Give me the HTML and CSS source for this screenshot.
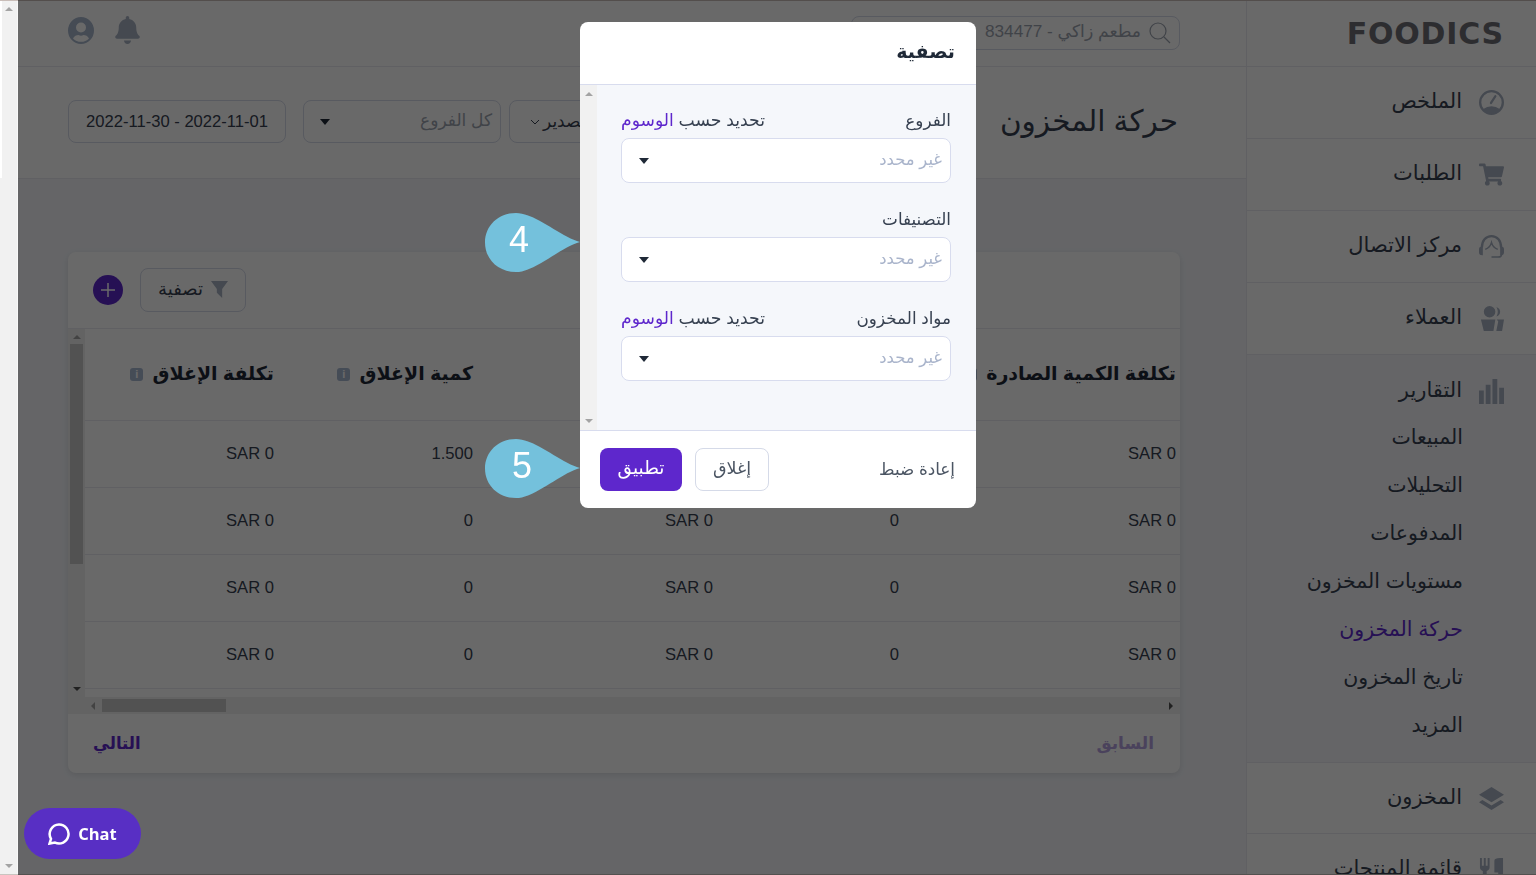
FILE: index.html
```html
<!doctype html>
<html lang="ar" dir="rtl">
<head>
<meta charset="UTF-8">
<title>حركة المخزون</title>
<link rel="stylesheet" href="styles.css">
</head>
<body>
<div class="screen">

	<!-- sidebar -->
	<nav class="side">
		<div class="logo_box"><span class="logo">FOODICS</span></div>
		<a class="nav_item">
			<svg class="nav_ico" viewBox="0 0 26 26"><path fill-rule="evenodd" d="M13 0a13 13 0 1 1 0 26a13 13 0 0 1 0-26zm0 2.400a10.600 10.600 0 1 0 0 21.200a10.600 10.600 0 0 0 0-21.200z"/><path d="M4 20Q13 14 22 20A12 12 0 0 1 4 20z"/><path d="M12.500 13.500L17 6.500" stroke="#a7b1c2" stroke-width="2.400" stroke-linecap="round"/></svg>
			<span>الملخص</span>
		</a>
		<a class="nav_item">
			<svg class="nav_ico" viewBox="0 0 576 512"><path d="M528.12 301.319l47.273-208C578.806 78.301 567.391 64 551.99 64H159.208l-9.166-44.81C147.758 8.021 137.93 0 126.529 0H24C10.745 0 0 10.745 0 24v16c0 13.255 10.745 24 24 24h69.883l70.248 343.435C147.325 417.1 136 435.222 136 456c0 30.928 25.072 56 56 56s56-25.072 56-56c0-15.674-6.447-29.835-16.824-40h209.647C430.447 426.165 424 440.326 424 456c0 30.928 25.072 56 56 56s56-25.072 56-56c0-22.172-12.888-41.332-31.579-50.405l5.517-24.276c3.413-15.018-8.002-29.319-23.403-29.319H218.117l-6.545-32h293.145c11.206 0 20.92-7.754 23.403-18.681z"/></svg>
			<span>الطلبات</span>
		</a>
		<a class="nav_item">
			<svg class="nav_ico" viewBox="0 0 26 24"><path d="M3 13C3 6 7 1.300 13 1.300S23 6 23 13" fill="none" stroke="#a7b1c2" stroke-width="2.400"/><path d="M6.500 15c2.500-1 5.500-3.500 6.500-7 1 3.500 4 6 6.500 7" fill="none" stroke="#a7b1c2" stroke-width="1.600"/><path d="M0 15a3 3 0 0 1 3-3h1v9H3a3 3 0 0 1-3-3zM26 15a3 3 0 0 0-3-3h-1v9h1a3 3 0 0 0 3-3z"/><path d="M23.500 20c0 2-1.500 3-3.500 3h-7" fill="none" stroke="#a7b1c2" stroke-width="1.600"/></svg>
			<span>مركز الاتصال</span>
		</a>
		<a class="nav_item">
			<svg class="nav_ico" viewBox="0 0 26 26"><path d="M11 0a6 6 0 1 1 0 12a6 6 0 0 1 0-12zM18 1c3 1 4 3 4 5s-1 4-4 5c1-1.500 1.500-3 1.500-5S19 2.500 18 1zM2 14h15l-2 12H5zM18.500 14H26l-2 12h-6l2-10z"/></svg>
			<span>العملاء</span>
		</a>
		<div class="nav_group">
			<div class="nav_head">
				<svg class="nav_ico" viewBox="0 0 26 26"><path d="M0 12h5v14H0zM7 6h5v20H7zM14 0h5v26h-5zM21 9h5v17h-5z"/></svg>
				<span>التقارير</span>
			</div>
			<a class="sub_item">المبيعات</a>
			<a class="sub_item">التحليلات</a>
			<a class="sub_item">المدفوعات</a>
			<a class="sub_item">مستويات المخزون</a>
			<a class="sub_item active">حركة المخزون</a>
			<a class="sub_item">تاريخ المخزون</a>
			<a class="sub_item">المزيد</a>
		</div>
		<a class="nav_item short">
			<svg class="nav_ico" viewBox="0 0 26 24"><path d="M13 0l13 8-13 8L0 8z"/><path d="M3.500 13.500L13 19.300l9.500-5.800L26 16 13 24 0 16z"/></svg>
			<span>المخزون</span>
		</a>
		<a class="nav_item">
			<svg class="nav_ico" viewBox="0 0 26 24"><path d="M1 0h2v8h2V0h2v8h2V0h2v10c0 2-1.500 3-3 3.500V24H4V13.500C2.500 13 1 12 1 10zM16 3c0-2 2-3 6-3h3v24h-5v-9h-4z"/></svg>
			<span>قائمة المنتجات</span>
		</a>
	</nav>

	<!-- main -->
	<div class="main">
		<header class="top">
			<div class="search">
				<svg class="search_ico" viewBox="0 0 22 22"><circle cx="9" cy="9" r="8"/><path d="M15 15l6 6"/></svg>
				<span>مطعم زاكي - 834477</span>
			</div>
			<div class="top_icons">
				<svg class="bell" viewBox="0 0 448 512"><path d="M224 512c35.32 0 63.97-28.65 63.97-64H160.03c0 35.35 28.65 64 63.97 64zm215.39-149.71c-19.32-20.76-55.47-51.99-55.47-154.29 0-77.7-54.48-139.9-127.94-155.16V32c0-17.67-14.32-32-31.98-32s-31.98 14.33-31.98 32v20.84C118.56 68.1 64.08 130.3 64.08 208c0 102.3-36.15 133.53-55.47 154.29-6 6.45-8.66 14.16-8.61 21.71.11 16.4 12.98 32 32.1 32h383.8c19.12 0 32-15.6 32.1-32 .05-7.55-2.61-15.27-8.61-21.71z"/></svg>
				<svg class="user" viewBox="0 0 26 27"><path fill-rule="evenodd" d="M13 0a13 13.500 0 1 1 0 27a13 13.500 0 0 1 0-27zm0 5.500a5 5 0 1 0 0 10a5 5 0 0 0 0-10zM5 21.500c2 2.500 5 3.300 8 3.300s6-.8 8-3.300c-1-2.500-3.500-3.500-5.500-3.500-1 .5-1.500.7-2.500.7s-1.500-.2-2.500-.7c-2 0-4.500 1-5.500 3.500z"/></svg>
			</div>
		</header>

		<div class="head_row">
			<h1 class="page_tit">حركة المخزون</h1>
			<div class="controls">
				<button class="ctl export">تصدير <svg class="chev" viewBox="0 0 10 6"><path d="M1 1l4 4 4-4"/></svg></button>
				<div class="ctl branches"><span>كل الفروع</span><i class="caret"></i></div>
				<div class="ctl dates">2022-11-01 - 2022-11-30</div>
			</div>
		</div>

		<section class="content">
			<div class="card">
				<div class="toolbar">
					<button class="filter_btn">
						<svg class="funnel" viewBox="0 0 16 16"><path d="M0 0h16l-5.500 7.500V16L5.500 11V7.500z"/></svg>
						تصفية
					</button>
					<span class="add_btn"><svg viewBox="0 0 14 14"><path d="M7 0v14M0 7h14"/></svg></span>
				</div>

				<div class="tbl_wrap">
					<div class="tbl_area">
						<table class="tbl">
							<colgroup><col class="c1"><col class="c2"><col class="c3"><col class="c4"><col class="c5"></colgroup>
							<thead>
								<tr>
									<th>تكلفة الكمية الصادرة <i class="info">i</i></th>
									<th>الكمية الواردة <i class="info">i</i></th>
									<th>تكلفة الوارد <i class="info">i</i></th>
									<th>كمية الإغلاق <i class="info">i</i></th>
									<th>تكلفة الإغلاق <i class="info">i</i></th>
								</tr>
							</thead>
							<tbody>
								<tr><td>SAR 0</td><td>0</td><td>SAR 0</td><td>1.500</td><td>SAR 0</td></tr>
								<tr><td>SAR 0</td><td>0</td><td>SAR 0</td><td>0</td><td>SAR 0</td></tr>
								<tr><td>SAR 0</td><td>0</td><td>SAR 0</td><td>0</td><td>SAR 0</td></tr>
								<tr><td>SAR 0</td><td>0</td><td>SAR 0</td><td>0</td><td>SAR 0</td></tr>
							</tbody>
						</table>
					</div>
					<div class="v_bar">
						<i class="arr up"></i>
						<span class="v_thumb"></span>
						<i class="arr down"></i>
					</div>
					<div class="h_bar">
						<i class="arr right"></i>
						<span class="h_space"></span>
						<span class="h_thumb"></span>
						<i class="arr left"></i>
					</div>
				</div>

				<div class="pager">
					<a class="prev">السابق</a>
					<a class="next">التالي</a>
				</div>
			</div>
		</section>

		<div class="shade"></div>

		<!-- modal -->
		<div class="modal">
			<div class="m_head">تصفية</div>
			<div class="m_body">
				<div class="m_fields">
					<div class="field">
						<div class="f_label"><label>الفروع</label><a>تحديد حسب <b>الوسوم</b></a></div>
						<div class="f_select"><span>غير محدد</span><i class="caret"></i></div>
					</div>
					<div class="field">
						<div class="f_label"><label>التصنيفات</label></div>
						<div class="f_select"><span>غير محدد</span><i class="caret"></i></div>
					</div>
					<div class="field">
						<div class="f_label"><label>مواد المخزون</label><a>تحديد حسب <b>الوسوم</b></a></div>
						<div class="f_select"><span>غير محدد</span><i class="caret"></i></div>
					</div>
				</div>
				<div class="m_bar"><i class="arr up"></i><i class="arr down"></i></div>
			</div>
			<div class="m_foot">
				<a class="reset">إعادة ضبط</a>
				<div class="m_btns">
					<button class="btn_close">إغلاق</button>
					<button class="btn_apply">تطبيق</button>
				</div>
			</div>
		</div>

		<!-- callouts -->
		<div class="drop d4">
			<svg viewBox="0 0 95 59"><path d="M95 29C76 34 50 59 31 59C13 59 0 46 0 29.500C0 13 13 0 31 0C50 0 76 24 95 29Z"/></svg>
			<span>4</span>
		</div>
		<div class="drop d5">
			<svg viewBox="0 0 95 59"><path d="M95 29C76 34 50 59 31 59C13 59 0 46 0 29.500C0 13 13 0 31 0C50 0 76 24 95 29Z"/></svg>
			<span>5</span>
		</div>

		<button class="chat">
			<svg viewBox="0 0 22 22"><path d="M11 1.500a9.500 9.500 0 1 1-4 18.100l-5.500 1 1.500-4.800A9.500 9.500 0 0 1 11 1.500z"/></svg>
			<span>Chat</span>
		</button>
	</div>

	<!-- page scrollbar -->
	<div class="page_bar">
		<i class="arr up"></i>
		<i class="arr down"></i>
	</div>
</div>
</body>
</html>
```

FILE: styles.css
```css
* {
box-sizing: border-box;
}

html, body {
margin: 0;
height: 100%;
overflow: hidden;
}

body {
font-family: "Liberation Sans", "DejaVu Sans", sans-serif;
font-size: 16.600px;
color: #374151;
background: #fff;
}

a, button {
font-family: inherit;
}

/* whole window */
.screen {
display: flex;
height: 875px;
border-top: 1px solid #c9bdb8;
border-bottom: 1px solid #c9c5c0;
overflow: hidden;
}

/* sidebar */
.side {
width: 290px;
flex: none;
background: #fff;
border-left: 1px solid #e8eaf1;
}

.logo_box {
height: 66px;
border-bottom: 1px solid #e8eaf1;
display: flex;
align-items: center;
padding-right: 32px;
direction: ltr;
justify-content: flex-end;
}

.logo {
font-family: "DejaVu Sans", sans-serif;
font-weight: bold;
font-size: 30px;
letter-spacing: 0.800px;
line-height: 1;
color: #6d6e76;
}

.nav_item, .nav_head {
display: flex;
align-items: center;
gap: 17px;
padding-right: 32px;
font-size: 21px;
}

.nav_item span, .nav_head span {
margin-bottom: 3px;
}

.nav_item {
height: 72px;
border-bottom: 1px solid #e8eaf1;
}

.nav_item.short {
height: 71px;
}

.nav_ico {
width: 25px;
height: 25px;
flex: none;
fill: #a7b1c2;
}

.nav_group {
height: 408px;
background: #f4f6fb;
border-bottom: 1px solid #e8eaf1;
padding-top: 12px;
}

.nav_head {
height: 48px;
}

.sub_item {
display: block;
height: 48px;
line-height: 44px;
padding-right: 73px;
font-size: 20.500px;
}

.sub_item.active {
color: #5e27cc;
}

/* main part */
.main {
flex: 1;
min-width: 0;
background: #f4f6fb;
}

.top {
background: #fff;
border-bottom: 1px solid #e8eaf1;
padding: 15px 66px 0 50px;
display: flex;
justify-content: space-between;
align-items: flex-start;
height: 66px;
}

.search {
width: 329px;
height: 34px;
border: 1px solid #d5dae8;
border-radius: 8px;
display: flex;
align-items: center;
gap: 8px;
padding-right: 8px;
color: #9ca3af;
font-size: 17.200px;
}

.search span {
margin-bottom: 3px;
}

.search_ico {
width: 22px;
height: 22px;
fill: none;
stroke: #9ca3af;
stroke-width: 1.200;
}

.top_icons {
display: flex;
align-items: center;
gap: 21px;
}

.user {
width: 26px;
height: 27px;
fill: #a7b6cc;
}

.bell {
width: 25px;
height: 28px;
fill: #a7b1c2;
}

.head_row {
height: 112px;
background: #fff;
border-bottom: 1px solid #e8eaf1;
padding: 0 68px 2px 50px;
display: flex;
justify-content: space-between;
align-items: center;
}

.page_tit {
margin: 0 0 2px;
font-size: 29.500px;
font-weight: normal;
}

.controls {
display: flex;
align-items: center;
gap: 8px;
}

.ctl {
height: 43px;
border: 1px solid #d5dae8;
border-radius: 8px;
background: #fff;
display: flex;
align-items: center;
font-size: 16.600px;
color: #374151;
}

.export {
width: 140px;
gap: 3px;
justify-content: flex-end;
padding: 0 0 0 20px;
font-size: 17px;
}

.chev {
width: 10px;
height: 6px;
fill: none;
stroke: #374151;
}

.branches {
width: 198px;
justify-content: space-between;
padding: 0 8px 0 16px;
color: #9ca3af;
font-size: 17px;
}

.branches span {
margin-bottom: 2px;
}

.dates {
width: 218px;
justify-content: center;
margin-right: 9px;
}

.caret {
display: block;
width: 0;
height: 0;
border-top: 6px solid #1f2937;
border-left: 5.500px solid transparent;
border-right: 5.500px solid transparent;
}

.content {
padding: 73px 66px 0 50px;
}

/* table card */
.card {
height: 521px;
background: #fff;
border-radius: 8px;
box-shadow: 0 2px 6px rgba(0, 0, 0, 0.1);
display: flex;
flex-direction: column;
}

.toolbar {
height: 77px;
flex: none;
display: flex;
align-items: center;
justify-content: flex-end;
gap: 17px;
padding-left: 25px;
border-bottom: 1px solid #e8eaf1;
}

.filter_btn {
width: 106px;
height: 44px;
border: 1px solid #d5dae8;
border-radius: 8px;
background: #fff;
display: flex;
align-items: center;
justify-content: center;
gap: 8px;
font-size: 18px;
color: #374151;
padding: 0 0 2px;
}

.funnel {
width: 17px;
height: 17px;
fill: #a7b1c2;
}

.add_btn {
width: 30px;
height: 30px;
border-radius: 50%;
background: #5e27cc;
display: flex;
align-items: center;
justify-content: center;
}

.add_btn svg {
width: 14px;
height: 14px;
stroke: #fff;
stroke-width: 1.500;
}

.tbl_wrap {
flex: 1;
display: grid;
grid-template-columns: 1fr 17px;
grid-template-rows: 368px 17px;
}

.tbl_area {
overflow: hidden;
}

.tbl {
width: 1095px;
table-layout: fixed;
border-collapse: collapse;
}

.c1 { width: 277px; }
.c2 { width: 186px; }
.c3 { width: 240px; }
.c4 { width: 199px; }
.c5 { width: 193px; }

.tbl th {
height: 91px;
padding: 0 4px 2px 0;
text-align: right;
font-size: 19px;
font-weight: bold;
color: #1f2937;
border-bottom: 1px solid #e8eaf1;
white-space: nowrap;
}

.tbl td {
height: 67px;
padding: 0 4px 0 0;
text-align: right;
font-size: 16.600px;
color: #374151;
border-bottom: 1px solid #e8eaf1;
}

.info {
display: inline-block;
width: 13px;
height: 13px;
margin-right: 4px;
border-radius: 3px;
background: #a9b8d2;
color: #fff;
font-size: 11px;
font-style: normal;
line-height: 13px;
text-align: center;
vertical-align: middle;
}

/* fake scrollbars */
.arr {
display: block;
width: 0;
height: 0;
border: 4px solid transparent;
flex: none;
}

.arr.up {
border-top: 0;
border-bottom: 4px solid #a3a3a3;
}

.arr.down {
border-bottom: 0;
border-top: 4px solid #505050;
}

.arr.left {
border-left: 0;
border-right: 4px solid #a3a3a3;
}

.arr.right {
border-right: 0;
border-left: 4px solid #505050;
}

.v_bar {
background: #f1f1f1;
display: flex;
flex-direction: column;
align-items: center;
justify-content: space-between;
padding: 6px 0;
grid-row: 1;
grid-column: 2;
}

.v_thumb {
width: 13px;
height: 220px;
background: #c8c8c8;
margin-top: 5px;
margin-bottom: auto;
}

.h_bar {
grid-row: 2;
grid-column: 1 / 3;
background: #f1f1f1;
display: flex;
align-items: center;
padding: 0 7px 0 0;
direction: rtl;
}

.h_space {
flex: 1;
}

.h_thumb {
width: 124px;
height: 13px;
background: #c8c8c8;
margin-left: 7px;
}

.h_bar .arr.left {
margin-left: 23px;
}

.pager {
flex: 1;
display: flex;
align-items: center;
justify-content: space-between;
padding: 0 26px 0 25px;
font-size: 17px;
font-weight: bold;
}

.prev {
color: #b5a0e0;
}

.next {
color: #5e27cc;
font-size: 16.500px;
}

/* dark layer over the page */
.shade {
position: fixed;
top: 0;
left: 18px;
right: 0;
bottom: 0;
background: rgba(0, 0, 0, 0.59);
z-index: 1;
}

/* modal */
.modal {
position: fixed;
left: 580px;
top: 22px;
width: 396px;
height: 486px;
background: #fff;
border-radius: 8px;
overflow: hidden;
z-index: 2;
display: flex;
flex-direction: column;
}

.m_head {
height: 63px;
flex: none;
border-bottom: 1px solid #d8dcee;
padding: 0 21px 4px;
display: flex;
align-items: center;
font-size: 19px;
font-weight: bold;
color: #1f2937;
}

.m_body {
flex: 1;
background: #f5f7fb;
display: flex;
}

.m_fields {
flex: 1;
padding: 18px 25px 0 24px;
display: flex;
flex-direction: column;
gap: 19px;
}

.m_bar {
width: 17px;
flex: none;
background: #f1f1f1;
display: flex;
flex-direction: column;
align-items: center;
justify-content: space-between;
padding: 7px 0;
}

.m_bar .arr.down {
border-top-color: #a3a3a3;
}

.f_label {
height: 35px;
display: flex;
align-items: center;
justify-content: space-between;
font-size: 16.800px;
}

.f_label a {
font-size: 17.200px;
}

.f_label b {
font-weight: normal;
color: #5e27cc;
}

.f_select {
height: 45px;
background: #fff;
border: 1px solid #d8dcee;
border-radius: 8px;
display: flex;
align-items: center;
justify-content: space-between;
padding: 0 8px 0 17px;
color: #a9b4cb;
font-size: 16.500px;
}

.f_select span {
margin-bottom: 2px;
}

.m_foot {
height: 78px;
flex: none;
border-top: 1px solid #d8dcee;
display: flex;
align-items: center;
justify-content: space-between;
padding: 0 21px 0 20px;
}

.reset {
color: #4b5563;
font-size: 16.800px;
}

.m_btns {
display: flex;
gap: 13px;
}

.btn_close, .btn_apply {
height: 43px;
border-radius: 8px;
padding: 0 0 3px;
}

.btn_close {
width: 74px;
background: #fff;
border: 1px solid #d5dae8;
color: #4b5563;
font-size: 17.500px;
}

.btn_apply {
width: 82px;
background: #5e27cc;
border: 0;
color: #fff;
font-size: 18.500px;
}

/* teal callouts */
.drop {
position: fixed;
left: 485px;
width: 95px;
height: 59px;
z-index: 3;
}

.d4 {
top: 213px;
}

.d5 {
top: 439px;
}

.drop svg {
display: block;
width: 95px;
height: 59px;
fill: #74c1dc;
}

.drop span {
position: absolute;
left: 24px;
top: 6px;
font-size: 36px;
line-height: 41px;
color: #fff;
}

.d5 span {
left: 27px;
}

.chat {
position: fixed;
left: 24px;
top: 808px;
width: 117px;
height: 51px;
border: 0;
border-radius: 26px;
background: #582fc4;
color: #fff;
z-index: 3;
direction: ltr;
display: flex;
align-items: center;
justify-content: center;
gap: 8px;
font-family: "Open Sans", sans-serif;
font-weight: bold;
font-size: 16.500px;
padding: 0;
}

.chat svg {
width: 22px;
height: 22px;
fill: none;
stroke: #fff;
stroke-width: 2.500;
}

/* page scrollbar, far left */
.page_bar {
width: 18px;
flex: none;
background: linear-gradient(#fff, #fff) left top / 2px 177px no-repeat, #f1f1f1;
border-right: 1px solid #f8f8f8;
display: flex;
flex-direction: column;
align-items: center;
justify-content: space-between;
padding: 6px 0;
}

.page_bar .arr.down {
border-top-color: #a3a3a3;
}
```
